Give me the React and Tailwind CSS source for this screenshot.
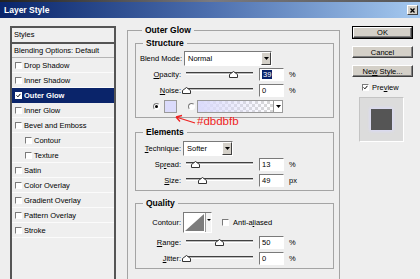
import React from 'react';

const sunken = 'border border-t-[#7a7a7a] border-l-[#7a7a7a] border-r-white border-b-white';
const raised = 'border border-t-white border-l-white border-r-[#404040] border-b-[#404040]';

function CheckBox({ checked, light }) {
  return (
    <span className={`w-[7px] h-[7px] shrink-0 flex items-center justify-center ${light ? 'bg-white border border-white' : 'bg-white ' + sunken}`}>
      {checked && (
        <svg width="7" height="7" viewBox="0 0 7 7" className="block">
          <path d="M0.8 3.4 L2.7 5.3 L6.2 1.2" stroke="#000" strokeWidth="1.4" fill="none" />
        </svg>
      )}
    </span>
  );
}

function Radio({ on }) {
  return (
    <span className={`w-[7px] h-[7px] shrink-0 rounded-full bg-white flex items-center justify-center ${sunken}`}>
      {on && <span className="w-[3px] h-[3px] rounded-full bg-black" />}
    </span>
  );
}

function DropArrow() {
  return (
    <svg width="5" height="3" viewBox="0 0 5 3" className="block">
      <path d="M0 0 H5 L2.5 3 Z" fill="#000" />
    </svg>
  );
}

function Select({ value, width }) {
  return (
    <div className={`ml-[2px] h-[15px] bg-white flex items-stretch ${sunken}`} style={{ width }}>
      <span className="flex-1 pl-[3px] flex items-center">{value}</span>
      <span className={`w-[10px] bg-[#d4d0c8] flex items-center justify-center ${raised}`}>
        <DropArrow />
      </span>
    </div>
  );
}

function Slider({ pos }) {
  return (
    <div className="relative ml-[5px] w-[67px] h-[8px] shrink-0">
      <div className="absolute left-0 right-0 top-[2px] h-[3px] bg-[#bcbcbc] border-t border-t-[#404040] border-b border-b-white" />
      <svg width="9" height="7" viewBox="0 0 9 7" className="absolute top-[1px]" style={{ left: pos - 4 }}>
        <path d="M0.5 6.5 V3.5 L4.5 0.5 L8.5 3.5 V6.5 Z" fill="#fff" stroke="#333" strokeWidth="1" />
      </svg>
    </div>
  );
}

function NumInput({ value, selected }) {
  return (
    <div className={`ml-[6px] w-[25px] h-[13px] bg-white flex items-center pl-[2px] ${sunken}`}>
      {selected ? <span className="bg-[#0a246a] text-white px-[1px] leading-[9px]">{value}</span> : <span>{value}</span>}
    </div>
  );
}

function Label({ children }) {
  return <span className="w-[45px] shrink-0 text-right">{children}</span>;
}

function SliderRow({ label, pos, value, unit, selected }) {
  return (
    <div className="flex items-center h-[16px]">
      <Label>{label}</Label>
      <Slider pos={pos} />
      <NumInput value={value} selected={selected} />
      <span className="ml-[5px]">{unit}</span>
    </div>
  );
}

function Group({ title, className = '', children }) {
  return (
    <fieldset className={`border border-[#a4a4a4] ${className}`}>
      <legend className="ml-[7px] px-[3px] text-[8.5px] font-bold leading-[10px]">{title}</legend>
      {children}
    </fieldset>
  );
}

const styleItems = [
  { label: 'Drop Shadow' },
  { label: 'Inner Shadow' },
  { label: 'Outer Glow', checked: true, selected: true },
  { label: 'Inner Glow' },
  { label: 'Bevel and Emboss' },
  { label: 'Contour', indent: true },
  { label: 'Texture', indent: true },
  { label: 'Satin' },
  { label: 'Color Overlay' },
  { label: 'Gradient Overlay' },
  { label: 'Pattern Overlay' },
  { label: 'Stroke' },
];

function StyleList() {
  return (
    <div className="ml-[10px] mt-[8px] w-[106px] h-[270px] border-2 border-[#555] bg-[#efefef]">
      <div className="h-[16px] border-b-2 border-[#555] pl-[2px] pb-[2px] flex items-center">Styles</div>
      <div className="h-[14px] border-b border-[#b4b4b4] pl-[2px] flex items-center">Blending Options: Default</div>
      {styleItems.map(item => (
        <div
          key={item.label}
          className={`h-[15px] flex items-center border-b ${item.indent ? 'pl-[13px]' : 'pl-[3px]'} ${item.selected ? 'bg-[#0a246a] text-white font-bold border-[#0a246a]' : 'border-[#fbfbfb]'}`}
        >
          <CheckBox checked={item.checked} light={item.selected} />
          <span className="ml-[2px]">{item.label}</span>
        </div>
      ))}
    </div>
  );
}

function OuterGlowPanel() {
  return (
    <div className="ml-[11px] mt-[7px] w-[213px]">
      <Group title="Outer Glow" className="h-[280px] pl-[7px] pr-[5px]">
        <Group title="Structure" className="mt-[3px] pt-[2px] pb-[3px]">
          <div className="flex items-center h-[16px]">
            <span className="w-[46px] shrink-0 text-right">Blend Mode:</span>
            <Select value="Normal" width={88} />
          </div>
          <SliderRow label={<><span className="underline">O</span>pacity:</>} pos={47} value="39" unit="%" selected />
          <SliderRow label={<><span className="underline">N</span>oise:</>} pos={0} value="0" unit="%" />
          <div className="flex items-center h-[16px] pl-[17px]">
            <Radio on />
            <span className="ml-[4px] w-[13px] h-[13px] bg-[#dbdbfb] border border-[#9a9a9a]" />
            <span className="ml-[11px]"><Radio /></span>
            <div className="ml-[2px] w-[86px] h-[13px] flex border border-[#9a9a9a] bg-white">
              <div className="flex-1 bg-[repeating-conic-gradient(#d6d6d6_0_25%,#ffffff_0_50%)] bg-[length:6px_6px]">
                <div className="h-full bg-gradient-to-r from-[#dbdbfb] to-[#dbdbfb00]" />
              </div>
              <span className="w-[9px] border-l border-[#9a9a9a] bg-white flex items-center justify-center">
                <DropArrow />
              </span>
            </div>
          </div>
        </Group>

        <Group title="Elements" className="mt-[9px] pt-[3px] pb-[2px]">
          <div className="flex items-center h-[16px]">
            <Label><span className="underline">T</span>echnique:</Label>
            <Select value="Softer" width={50} />
          </div>
          <SliderRow label={<>Sp<span className="underline">r</span>ead:</>} pos={9} value="13" unit="%" />
          <SliderRow label={<><span className="underline">S</span>ize:</>} pos={16} value="49" unit="px" />
        </Group>

        <Group title="Quality" className="mt-[7px] pt-[3px] pb-[2px]">
          <div className="flex items-center h-[23px]">
            <Label>Contour:</Label>
            <div className={`ml-[2px] w-[29px] h-[21px] flex bg-white ${sunken}`}>
              <svg width="21" height="19" viewBox="0 0 21 19" className="block">
                <path d="M1 18 L20 1 V18 Z" fill="#7c7c7c" />
              </svg>
              <span className="flex-1 border-l border-[#9a9a9a] bg-[#f4f4f4] flex justify-center pt-[6px]">
                <svg width="4" height="2" viewBox="0 0 4 2" className="block">
                  <path d="M0 0 H4 L2 2 Z" fill="#000" />
                </svg>
              </span>
            </div>
            <span className="ml-[10px]"><CheckBox /></span>
            <span className="ml-[4px]">Anti-a<span className="underline">l</span>iased</span>
          </div>
          <SliderRow label={<><span className="underline">R</span>ange:</>} pos={33} value="50" unit="%" />
          <SliderRow label={<><span className="underline">J</span>itter:</>} pos={0} value="0" unit="%" />
        </Group>
      </Group>
    </div>
  );
}

function Button({ children, isDefault }) {
  const inner = (
    <div className={`h-full bg-[#d4d0c8] flex items-center justify-center shadow-[inset_-1px_-1px_0_#808080] ${raised}`}>
      <span>{children}</span>
    </div>
  );
  if (isDefault) {
    return <div className="w-[61px] h-[13px] border border-black">{inner}</div>;
  }
  return <div className="w-[61px] h-[12px]">{inner}</div>;
}

function ButtonColumn() {
  return (
    <div className="ml-[12px] mt-[8px] w-[61px] flex flex-col">
      <Button isDefault>OK</Button>
      <div className="mt-[7px]"><Button>Cancel</Button></div>
      <div className="mt-[7px]"><Button>Ne<span className="underline">w</span> Style...</Button></div>
      <div className="mt-[5px] h-[11px] flex items-center pl-[10px]">
        <CheckBox checked />
        <span className="ml-[3px]">Pre<span className="underline">v</span>iew</span>
      </div>
      <div className="mt-[4px] ml-[7px] w-[45px] h-[45px] bg-[#dcdcdc] border border-t-[#c4c4c4] border-l-[#c4c4c4] border-r-white border-b-white flex items-center justify-center">
        <div className="w-[21px] h-[21px] bg-[#555555] shadow-[0_0_3px_1px_#dbdbfb]" />
      </div>
    </div>
  );
}

export default function App() {
  return (
    <div className="relative w-[420px] h-[279px] overflow-hidden bg-[#eeeeee] text-black text-[7.5px] leading-[9px] font-['Liberation_Sans',Arial,sans-serif]">
      <div className="h-[2px] bg-gradient-to-r from-[#222] via-[#7a7a80] to-[#555]" />
      <div className="h-[16px] flex items-center pl-[4px] pr-[2px] bg-gradient-to-r from-[#0a246a] via-[#4d6fae] to-[#a6caf0]">
        <span className="text-white font-bold text-[8.5px]">Layer Style</span>
        <span className={`ml-auto w-[11px] h-[10px] bg-[#d4d0c8] flex items-center justify-center ${raised}`}>
          <svg width="5" height="5" viewBox="0 0 5 5" className="block">
            <path d="M0.5 0.5 L4.5 4.5 M4.5 0.5 L0.5 4.5" stroke="#000" strokeWidth="1.3" />
          </svg>
        </span>
      </div>

      <div className="flex items-start">
        <StyleList />
        <OuterGlowPanel />
        <ButtonColumn />
      </div>

      {/* red annotation over the colour swatch */}
      <svg width="26" height="14" viewBox="0 0 26 14" className="absolute left-[172px] top-[112px]">
        <path d="M23 11 L4 5 M4 5 L10 3.5 M4 5 L8 9.5" stroke="#ee2222" strokeWidth="1.3" fill="none" />
      </svg>
      <span className="absolute left-[197px] top-[115px] text-[11.5px] leading-[13px] text-[#ee2222]">#dbdbfb</span>
    </div>
  );
}
